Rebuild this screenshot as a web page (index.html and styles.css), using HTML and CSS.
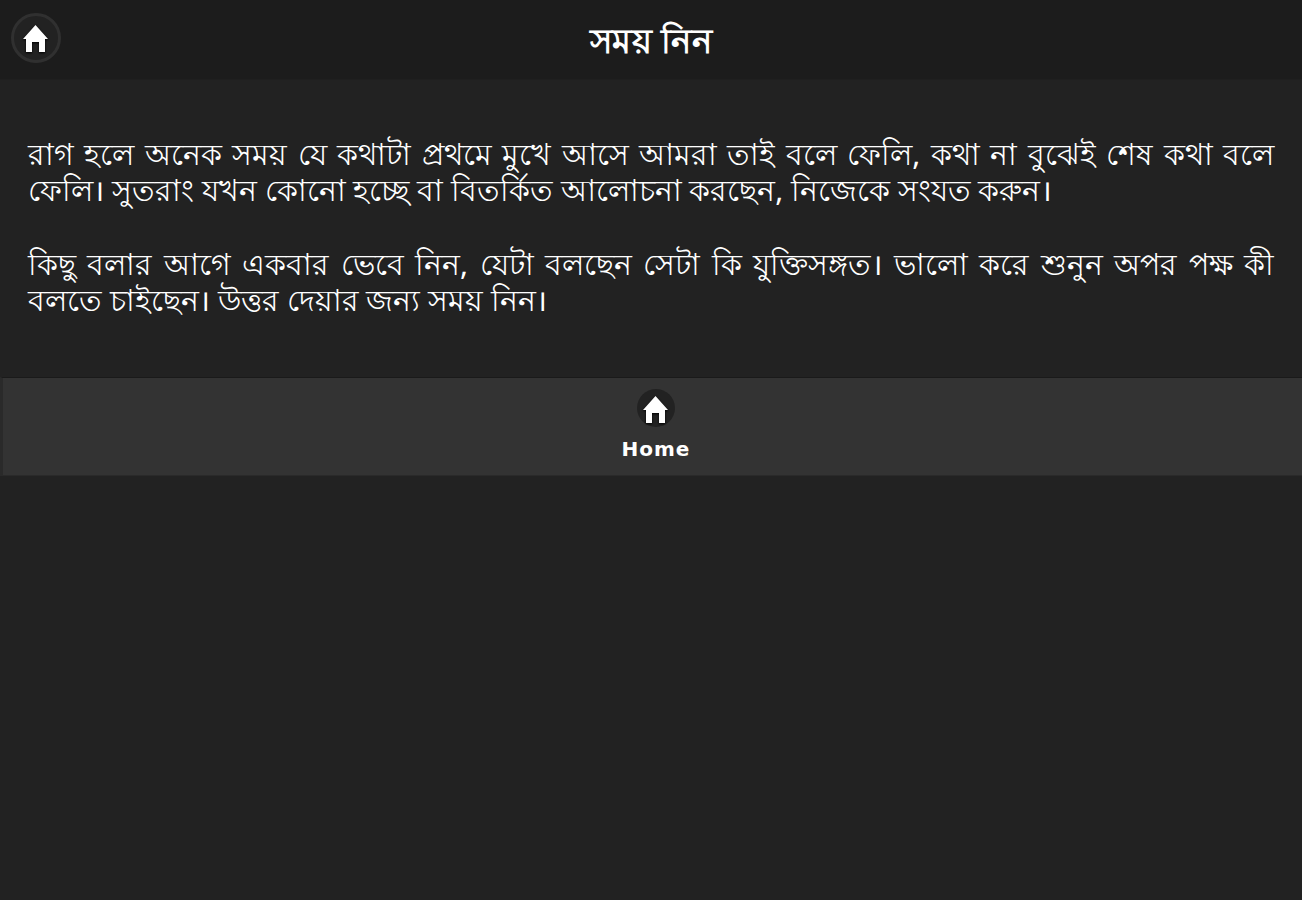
FILE: index.html
```html
<!DOCTYPE html>
<html lang="bn">
<head>
<meta charset="utf-8">
<title>সময় নিন</title>
<link rel="stylesheet" href="styles.css">
</head>
<body>
<div class="header">
	<a class="homeBtn" href="#">
		<svg class="homeIcon" viewBox="0 0 28 28"><path d="M13.5 1 L26 15 H23 V28 H17 V18 H10 V28 H4 V15 H1 Z"/></svg>
	</a>
	<h1>সময় নিন</h1>
</div>
<div class="content">
	<p>রাগ হলে অনেক সময় যে কথাটা প্রথমে মুখে আসে আমরা তাই বলে ফেলি, কথা না বুঝেই শেষ কথা বলে ফেলি। সুতরাং যখন কোনো হচ্ছে বা বিতর্কিত আলোচনা করছেন, নিজেকে সংযত করুন।</p>
	<p>কিছু বলার আগে একবার ভেবে নিন, যেটা বলছেন সেটা কি যুক্তিসঙ্গত। ভালো করে শুনুন অপর পক্ষ কী বলতে চাইছেন। উত্তর দেয়ার জন্য সময় নিন।</p>
</div>
<div class="navbar">
	<a class="navItem" href="#">
		<span class="navIcon">
			<svg class="homeIcon" viewBox="0 0 28 28"><path d="M13.5 1 L26 15 H23 V28 H17 V18 H10 V28 H4 V15 H1 Z"/></svg>
		</span>
		<span class="navLabel">Home</span>
	</a>
</div>
</body>
</html>
```

FILE: styles.css
```css
html,body{
	padding:0;
	margin:0;
	height:100%;
	background-color:#222222;
	color:#FFFFFF;
	font-family:"Noto Sans","Liberation Sans",sans-serif;
}
.header{
	display:flex;
	align-items:center;
	justify-content:center;
	position:relative;
	height:79px;
	background-color:#1c1c1c;
	border-bottom:1px solid #1f1f1f;
}
.header h1{
	margin:0;
	font-size:34px;
	line-height:40px;
	font-weight:bold;
	letter-spacing:0.5px;
}
.homeBtn{
	position:absolute;
	left:11px;
	top:13px;
	width:50px;
	height:50px;
	box-sizing:border-box;
	display:flex;
	align-items:center;
	justify-content:center;
	border-radius:50%;
	border:3px solid #303030;
	background-color:#222222;
}
.homeIcon{
	width:28px;
	height:28px;
	fill:#FFFFFF;
	filter:drop-shadow(0 1px 1px #000000);
}
.content{
	padding:56px 28px 59px 28px;
}
.content p{
	margin:0 0 38px 0;
	font-size:29.8px;
	line-height:36px;
	text-align:justify;
}
.content p:last-child{
	margin-bottom:0;
}
.navbar{
	display:flex;
	justify-content:center;
	height:97px;
	padding-left:7px;
	background-color:#333333;
	border-left:3px solid #2a2a2a;
	border-top:1px solid #1a1a1a;
	border-bottom:1px solid #2a2a2a;
}
.navItem{
	display:flex;
	flex-direction:column;
	align-items:center;
	color:#FFFFFF;
	text-decoration:none;
	padding-top:11px;
}
.navIcon{
	display:flex;
	align-items:center;
	justify-content:center;
	box-sizing:border-box;
	width:38px;
	height:38px;
	padding-top:2px;
	border-radius:50%;
	background-color:#222222;
}
.navLabel{
	margin-top:10px;
	font-family:"DejaVu Sans",sans-serif;
	font-size:20px;
	font-weight:bold;
	letter-spacing:1px;
}
```
